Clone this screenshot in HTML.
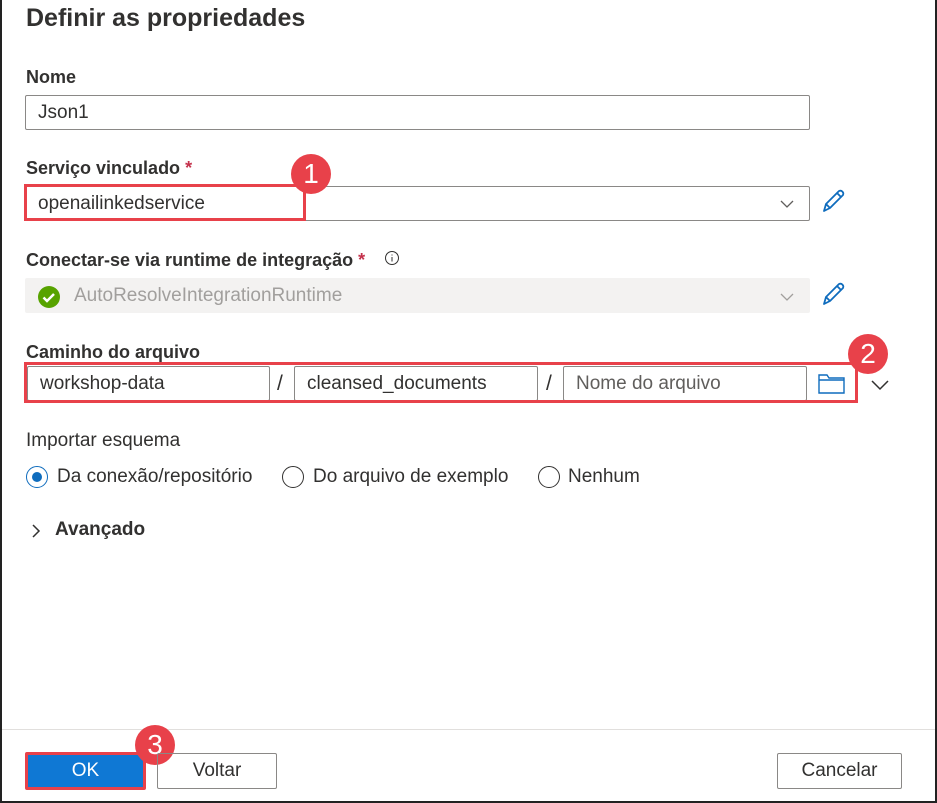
<!DOCTYPE html>
<html><head><meta charset="utf-8"><style>
body{margin:0;width:937px;height:803px;background:#fff;font-family:"Liberation Sans",sans-serif;color:#323130;position:relative;overflow:hidden}
.a{position:absolute}
.lbl{position:absolute;left:26px;font-size:18px;font-weight:bold;color:#323130}
.inp{position:absolute;border:1px solid #8a8886;border-radius:2px;box-sizing:border-box;font-size:19px;padding-left:12px;display:flex;align-items:center;background:#fff;white-space:nowrap}
.red{position:absolute;border:3px solid #e8414a;box-sizing:border-box}
.badge{position:absolute;width:40px;height:40px;border-radius:50%;background:#e8414a;color:#fff;font-size:28px;text-align:center;line-height:40px}
.star{color:#c4314b}
.radio{position:absolute;width:22px;height:22px;border:1.5px solid #323130;border-radius:50%;box-sizing:border-box}
.rt{position:absolute;font-size:19px;top:466px}
.btn{position:absolute;box-sizing:border-box;border:1px solid #8a8886;border-radius:2px;font-size:19px;text-align:center}
</style></head><body>
<div class="a" style="left:0;top:0;width:2px;height:803px;background:#222"></div>
<div class="a" style="right:0;top:0;width:2px;height:803px;background:#222"></div>
<div class="a" style="left:0;bottom:0;width:937px;height:2px;background:#222"></div>
<div class="a" style="left:26px;top:4px;font-size:25px;font-weight:bold;color:#323130">Definir as propriedades</div>

<div class="lbl" style="top:67px">Nome</div>
<div class="inp" style="left:25px;top:95px;width:785px;height:35px">Json1</div>

<div class="lbl" style="top:158px">Serviço vinculado <span class="star">*</span></div>
<div class="inp" style="left:25px;top:186px;width:785px;height:35px">openailinkedservice</div>
<svg class="a" style="left:779px;top:198px" width="16" height="12"><path d="M2 3l6 6 6-6" fill="none" stroke="#605e5c" stroke-width="1.3"/></svg>
<div class="red" style="left:24px;top:184px;width:282px;height:37px"></div>
<div class="badge" style="left:291px;top:154px">1</div>
<svg class="a" style="left:821px;top:188px" width="26" height="26"><path d="M3 23l2-7L18 3a3 3 0 014 4L9 20z M5 16l4 4 M16 5l4 4" fill="none" stroke="#0f6cbd" stroke-width="1.8" stroke-linejoin="round"/></svg>

<div class="lbl" style="top:250px">Conectar-se via runtime de integração <span class="star">*</span></div>
<svg class="a" style="left:384px;top:250px" width="16" height="16"><circle cx="8" cy="8" r="6.5" fill="none" stroke="#323130"/><path d="M8 7v4.5M8 4.5v1" stroke="#323130"/></svg>
<div class="inp" style="left:25px;top:278px;width:785px;height:35px;background:#f3f2f1;border:none;color:#a19f9d;padding-left:49px">AutoResolveIntegrationRuntime</div>
<svg class="a" style="left:37px;top:285px" width="24" height="24"><circle cx="12" cy="12" r="11" fill="#57a300"/><path d="M6.5 12.5l3.5 3.5 7-7" fill="none" stroke="#fff" stroke-width="2.5"/></svg>
<svg class="a" style="left:779px;top:291px" width="16" height="12"><path d="M2 3l6 6 6-6" fill="none" stroke="#a19f9d" stroke-width="1.3"/></svg>
<svg class="a" style="left:821px;top:281px" width="26" height="26"><path d="M3 23l2-7L18 3a3 3 0 014 4L9 20z M5 16l4 4 M16 5l4 4" fill="none" stroke="#0f6cbd" stroke-width="1.8" stroke-linejoin="round"/></svg>

<div class="lbl" style="top:342px">Caminho do arquivo</div>
<div class="inp" style="left:27px;top:366px;width:243px;height:35px">workshop-data</div>
<div class="a" style="left:277px;top:372px;font-size:21px">/</div>
<div class="inp" style="left:294px;top:366px;width:244px;height:35px">cleansed_documents</div>
<div class="a" style="left:546px;top:372px;font-size:21px">/</div>
<div class="inp" style="left:563px;top:366px;width:244px;height:35px;color:#605e5c">Nome do arquivo</div>
<svg class="a" style="left:818px;top:373px" width="28" height="22"><path d="M1 2h8l2 3h15v15H1z M1 7h25" fill="none" stroke="#0f6cbd" stroke-width="1.4"/></svg>
<div class="red" style="left:24px;top:362px;width:834px;height:41px"></div>
<div class="badge" style="left:848px;top:334px">2</div>
<svg class="a" style="left:870px;top:378px" width="20" height="14"><path d="M2 3l8 8 8-8" fill="none" stroke="#323130" stroke-width="1.5"/></svg>

<div class="a" style="left:26px;top:430px;font-size:19px">Importar esquema</div>
<div class="radio" style="left:26px;top:466px;border-color:#0f6cbd"><div class="a" style="left:4.5px;top:4.5px;width:10px;height:10px;border-radius:50%;background:#0f6cbd"></div></div>
<div class="rt" style="left:57px">Da conexão/repositório</div>
<div class="radio" style="left:282px;top:466px"></div>
<div class="rt" style="left:313px">Do arquivo de exemplo</div>
<div class="radio" style="left:538px;top:466px"></div>
<div class="rt" style="left:568px">Nenhum</div>

<svg class="a" style="left:30px;top:523px" width="12" height="16"><path d="M3 2l6 6-6 6" fill="none" stroke="#323130" stroke-width="1.5"/></svg>
<div class="a" style="left:55px;top:519px;font-size:19px;font-weight:bold">Avançado</div>

<div class="a" style="left:2px;top:729px;width:933px;height:1px;background:#e1dfdd"></div>
<div class="btn" style="left:25px;top:752px;width:121px;height:38px;background:#0f78d4;border:3px solid #e8414a;color:#fff;line-height:32px">OK</div>
<div class="badge" style="left:135px;top:725px">3</div>
<div class="btn" style="left:157px;top:753px;width:120px;height:36px;line-height:34px">Voltar</div>
<div class="btn" style="left:777px;top:753px;width:125px;height:36px;line-height:34px">Cancelar</div>
</body></html>
